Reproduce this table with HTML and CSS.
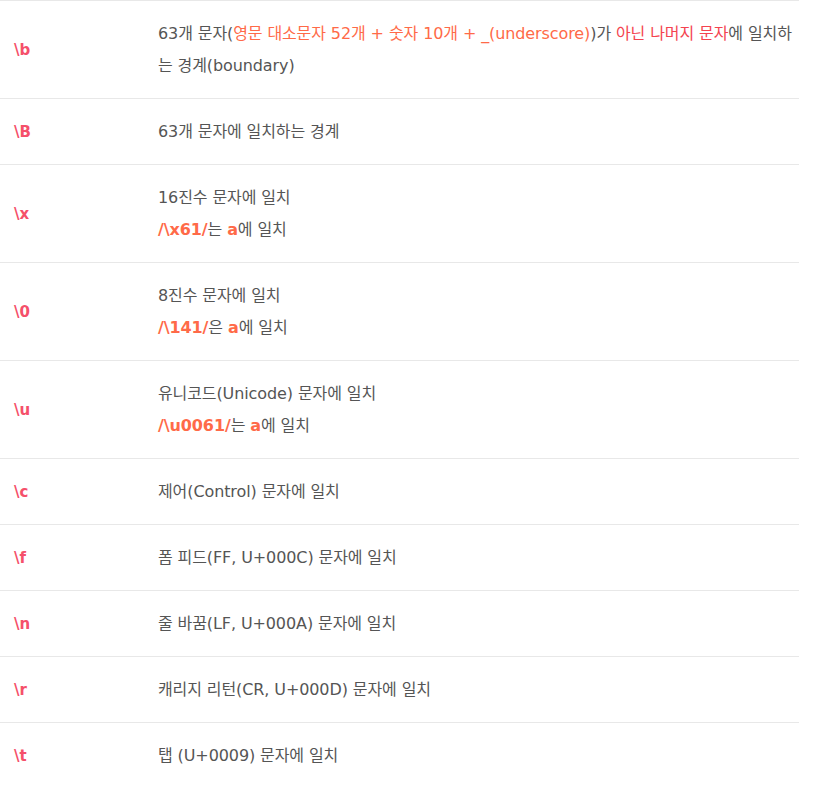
FILE: index.html
```html
<!DOCTYPE html>
<html lang="ko">
<head>
<meta charset="utf-8">
<link rel="stylesheet" href="styles.css">
</head>
<body>
<table class="regex">
  <tbody>
    <tr>
      <td class="code">\b</td>
      <td class="desc">63개 문자(<span class="hl">영문 대소문자 52개 + 숫자 10개 + _(underscore)</span>)가 <span class="red">아닌 나머지 문자</span>에 일치하는 경계(boundary)</td>
    </tr>
    <tr>
      <td class="code">\B</td>
      <td class="desc">63개 문자에 일치하는 경계</td>
    </tr>
    <tr>
      <td class="code">\x</td>
      <td class="desc">16진수 문자에 일치<br><b class="hl">/\x61/</b>는 <b class="hl">a</b>에 일치</td>
    </tr>
    <tr>
      <td class="code">\0</td>
      <td class="desc">8진수 문자에 일치<br><b class="hl">/\141/</b>은 <b class="hl">a</b>에 일치</td>
    </tr>
    <tr>
      <td class="code">\u</td>
      <td class="desc">유니코드(Unicode) 문자에 일치<br><b class="hl">/\u0061/</b>는 <b class="hl">a</b>에 일치</td>
    </tr>
    <tr>
      <td class="code">\c</td>
      <td class="desc">제어(Control) 문자에 일치</td>
    </tr>
    <tr>
      <td class="code">\f</td>
      <td class="desc">폼 피드(FF, U+000C) 문자에 일치</td>
    </tr>
    <tr>
      <td class="code">\n</td>
      <td class="desc">줄 바꿈(LF, U+000A) 문자에 일치</td>
    </tr>
    <tr>
      <td class="code">\r</td>
      <td class="desc">캐리지 리턴(CR, U+000D) 문자에 일치</td>
    </tr>
    <tr>
      <td class="code">\t</td>
      <td class="desc">탭 (U+0009) 문자에 일치</td>
    </tr>
  </tbody>
</table>
</body>
</html>
```
FILE: styles.css
```css
html, body {
  margin: 0;
  padding: 0;
  background: #ffffff;
}
body {
  font-family: "DejaVu Sans", "Noto Sans CJK KR", sans-serif;
  font-size: 16px;
  color: #555555;
}
.regex {
  width: 799px;
  border-collapse: collapse;
  border-top: 1px solid #e8e8e8;
}
.regex td {
  border-bottom: 1px solid #e8e8e8;
  padding: 17px 0 16px 0;
  line-height: 32px;
  vertical-align: middle;
}
.regex .code {
  width: 144px;
  padding-left: 14px;
  color: #f5506a;
  font-weight: bold;
  font-size: 15px;
  white-space: nowrap;
}
.regex .desc {
  padding-right: 0;
  letter-spacing: -0.1px;
}
.hl {
  color: #ff6a48;
}
b.hl {
  font-weight: bold;
}
.red {
  color: #f4434f;
}
```
